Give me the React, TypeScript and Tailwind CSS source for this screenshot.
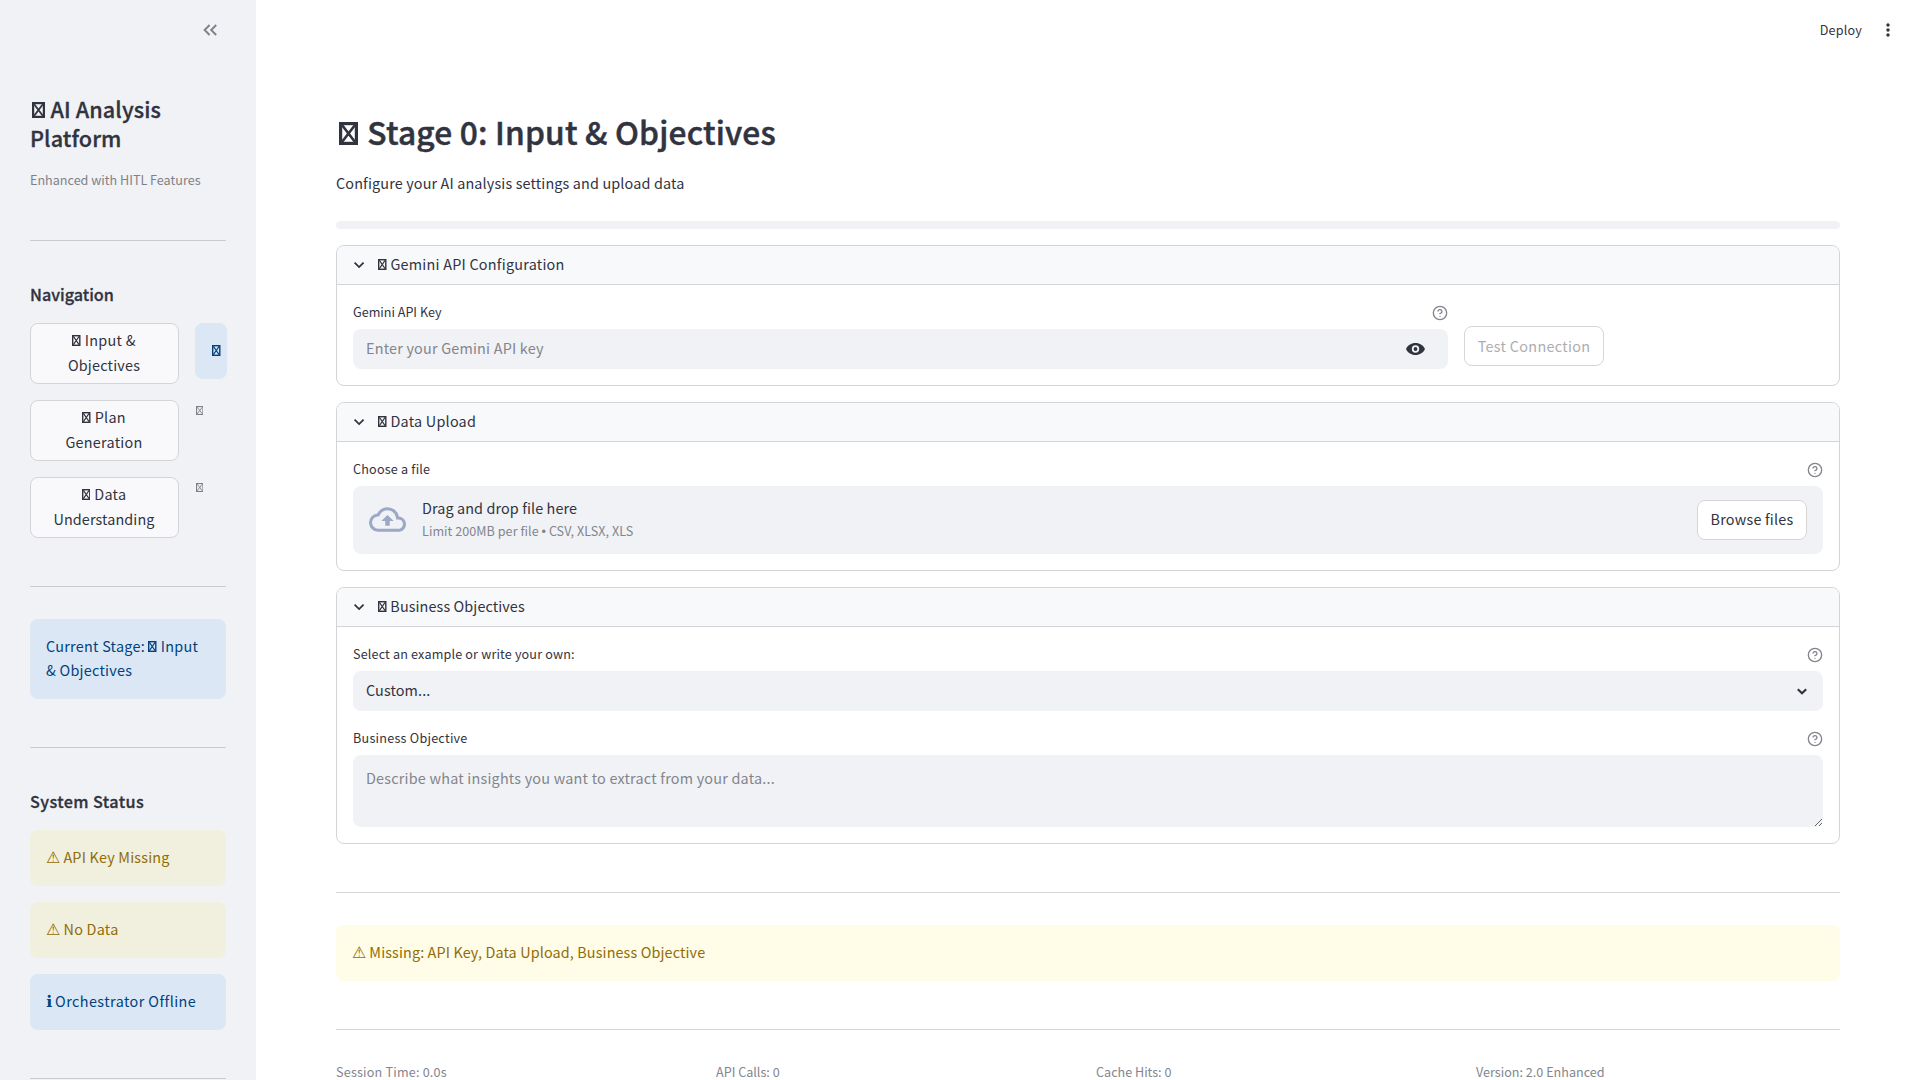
import React from "react";
import { MdMoreVert, MdOutlineCloudUpload } from "react-icons/md";
import { FiHelpCircle } from "react-icons/fi";

type Kids = { children?: React.ReactNode; className?: string };

/* Boxed cross shown where an emoji glyph is missing. */
function Box({ className = "mr-[0.5px] h-[11px] w-[8.5px]", w = 8.5, h = 11, s = 1.4, x = 1.1 }: { className?: string; w?: number; h?: number; s?: number; x?: number }) {
  const a = s / 2;
  return (
    <svg className={"inline-block align-baseline " + className} viewBox={`0 0 ${w} ${h}`} fill="none" stroke="currentColor">
      <rect x={a} y={a} width={w - s} height={h - s} strokeWidth={s} />
      <path d={`M${s} ${s}L${w - s} ${h - s}M${w - s} ${s}L${s} ${h - s}`} strokeWidth={x} />
    </svg>
  );
}

function Warn() {
  return <span className="mr-px inline-block w-[13px] font-['DejaVu_Sans'] text-[16px] leading-none tracking-normal">⚠</span>;
}

function SideRule({ className = "" }: Kids) {
  return <div className={"h-px shrink-0 bg-[#cacbd0] " + className} />;
}

function NavButton({ first, second, tracking }: { first: string; second: string; tracking: string }) {
  return (
    <button className="flex h-[61px] w-[149px] flex-col items-center justify-center rounded-lg border border-[#d3d4d8] bg-[#f9f9fb] pr-px pb-[3px] leading-[25px]">
      <span className="tracking-[0.27px]"><Box /> {first}</span>
      <span className={tracking}>{second}</span>
    </button>
  );
}

function Alert({ children, className = "" }: Kids) {
  return <div className={"flex h-14 shrink-0 items-center rounded-lg px-4 pb-[2px] " + className}>{children}</div>;
}

function Expander({ title, children, className = "", tracking }: Kids & { title: string; tracking: string }) {
  return (
    <section className={"shrink-0 overflow-hidden rounded-lg border border-[#d3d4d8] " + className}>
      <div className="flex h-[39px] items-center border-b border-[#d3d4d8] bg-[#f8f9fb] pl-3">
        <svg className="h-5 w-5" viewBox="0 0 20 20" fill="none" stroke="currentColor" strokeWidth="1.8">
          <path d="M5.600 7.600 10.100 12.100 14.600 7.600" />
        </svg>
        <span className={"ml-[9px] pb-[2px] leading-6 " + tracking}><Box /> {title}</span>
      </div>
      <div className="px-4 pt-[17px] pb-4">{children}</div>
    </section>
  );
}

function Label({ children, className = "" }: Kids) {
  return (
    <div className={"mb-[7px] flex h-5 items-center justify-between text-[12.6px] leading-5 " + className}>
      <span>{children}</span>
      <FiHelpCircle className="mt-px h-4 w-4 text-[#83848c]" />
    </div>
  );
}

export default function App() {
  return (
    <div className="flex h-screen w-full overflow-hidden bg-white font-['Noto_Sans_CJK_SC',sans-serif] text-[14.4px] text-[#31333f]">
      <aside className="flex w-64 shrink-0 flex-col overflow-hidden bg-[#f0f2f6] px-[30px]">
        <div className="flex h-[60px] shrink-0 items-center justify-end pr-[9px]">
          <svg className="h-3 w-[14px] text-[#7f8189]" viewBox="0 0 14 12" fill="none" stroke="currentColor" strokeWidth="1.9">
            <path d="M6.600 1 1.600 6 6.600 11M13.200 1 8.200 6 13.200 11" />
          </svg>
        </div>
        <h2 className="mt-[34px] text-[21.6px] leading-[29px] font-medium tracking-[0.1px] [-webkit-text-stroke:0.3px]">
          <Box className="mr-px ml-[1.500px] h-4 w-[13px]" w={13} h={16} s={2.2} x={1.8} /> AI Analysis<br />Platform
        </h2>
        <p className="mt-[18px] text-[12.6px] leading-5 text-[#7f8189]">Enhanced with HITL Features</p>
        <SideRule className="mt-[50px]" />
        <h3 className="mt-[42px] text-[16.2px] leading-[22px] font-medium [-webkit-text-stroke:0.3px]">Navigation</h3>

        <div className="mt-[18px] flex flex-col gap-4">
          <div className="flex w-[197px] items-start gap-4">
            <NavButton first="Input &" second="Objectives" tracking="tracking-[0.2px]" />
            <div className="flex h-14 w-8 items-center rounded-lg bg-[#dbe7f4] pb-[2px] pl-[17px] text-[#004280]"><Box /></div>
          </div>
          <div className="flex items-start gap-4">
            <NavButton first="Plan" second="Generation" tracking="tracking-[0.25px]" />
            <span className="mt-[6px] ml-[0.5px] flex text-[#7f8189]"><Box className="h-[9px] w-[7.5px]" w={7.5} h={9} s={1.1} x={0.9} /></span>
          </div>
          <div className="flex items-start gap-4">
            <NavButton first="Data" second="Understanding" tracking="tracking-[0.1px]" />
            <span className="mt-[6px] ml-[0.5px] flex text-[#7f8189]"><Box className="h-[9px] w-[7.5px]" w={7.5} h={9} s={1.1} x={0.9} /></span>
          </div>
        </div>

        <SideRule className="mt-12" />
        <div className="mt-8 flex h-20 shrink-0 items-center rounded-lg bg-[#dbe7f4] px-4 pb-[2px] leading-6 tracking-[0.25px] text-[#004280]">
          <p>Current Stage: <Box /> Input<br />&amp; Objectives</p>
        </div>
        <SideRule className="mt-12" />
        <h3 className="mt-[42px] text-[16.2px] leading-[22px] font-medium tracking-[0.4px] [-webkit-text-stroke:0.3px]">System Status</h3>
        <div className="mt-[18px] flex flex-col gap-4">
          <Alert className="bg-[#f1f0df] tracking-[0.2px] text-[#926c05]"><p><Warn /> API Key Missing</p></Alert>
          <Alert className="bg-[#f1f0df] tracking-[0.25px] text-[#926c05]"><p><Warn /> No Data</p></Alert>
          <Alert className="bg-[#dbe7f4] tracking-[0.42px] text-[#004280]">
            <p><span className="font-['DejaVu_Sans'] text-[16px] leading-none tracking-normal">ℹ</span><span className="ml-[3px]">Orchestrator Offline</span></p>
          </Alert>
        </div>
        <SideRule className="mt-12" />
      </aside>

      <main className="flex min-w-0 flex-1 flex-col">
        <header className="flex h-[60px] shrink-0 items-center justify-end pr-[22px]">
          <span className="pb-px text-[12.6px] leading-5 tracking-[0.2px]">Deploy</span>
          <MdMoreVert className="ml-4 h-5 w-5" />
        </header>

        <div className="flex flex-col px-20 pt-[50px]">
          <h1 className="text-[31.7px] leading-[42px] font-medium tracking-[0.2px] [-webkit-text-stroke:0.5px]">
            <Box className="mr-[2.500px] ml-[2.500px] h-[23px] w-[19px]" w={19} h={23} s={3.2} x={2.6} /> Stage 0: Input &amp; Objectives
          </h1>
          <p className="mt-[19px] leading-6 tracking-[0.14px]">Configure your AI analysis settings and upload data</p>
          <div className="mt-[26px] h-2 rounded bg-[#f0f2f6]" />

          <Expander className="mt-4" title="Gemini API Configuration" tracking="tracking-[0.23px]">
            <div className="flex items-end gap-4">
              <div className="w-[1095px]">
                <Label>Gemini API Key</Label>
                <div className="flex h-10 items-center justify-between rounded-lg bg-[#f0f2f6] pr-[23.500px] pl-[13px]">
                  <span className="pb-[2px] leading-6 tracking-[0.2px] text-[#83858d]">Enter your Gemini API key</span>
                  <svg className="h-3 w-[19px]" viewBox="0 0 19 12" fill="currentColor">
                    <path fillRule="evenodd" d="M9.5 0C5.2 0 1.5 2.5 0 6c1.5 3.500 5.200 6 9.500 6S17.500 9.500 19 6C17.500 2.500 13.800 0 9.500 0ZM9.500 9.700a3.700 3.700 0 1 1 0-7.400 3.700 3.700 0 0 1 0 7.400Z" />
                    <circle cx="9.500" cy="6" r="1.900" />
                  </svg>
                </div>
              </div>
              <button className="mb-[3px] flex h-10 w-[140px] items-center justify-center rounded-lg border border-[#d6d6d9] tracking-[0.3px] text-[#adadb2]">Test Connection</button>
            </div>
          </Expander>

          <Expander className="mt-4" title="Data Upload" tracking="tracking-[0.23px]">
            <Label className="tracking-[0.2px]">Choose a file</Label>
            <div className="flex h-[68px] items-center rounded-lg bg-[#f0f2f6] px-4">
              <MdOutlineCloudUpload className="mb-[2px] h-[37px] w-[37px] text-[#9ba8c6]" />
              <div className="mb-[2px] ml-4">
                <p className="leading-6 tracking-[0.1px]">Drag and drop file here</p>
                <p className="text-[12.6px] leading-[22px] tracking-[0.04px] text-[#83858d]">
                  Limit 200MB per file <span className="font-['Liberation_Sans']">•</span> CSV, XLSX, XLS
                </p>
              </div>
              <button className="ml-auto flex h-10 w-[110px] items-center justify-center rounded-lg border border-[#d6d6d9] bg-white pb-[2px] tracking-[0.2px]">Browse files</button>
            </div>
          </Expander>

          <Expander className="mt-4" title="Business Objectives" tracking="tracking-[0.1px]">
            <Label className="tracking-[0.16px]">Select an example or write your own:</Label>
            <div className="flex h-10 items-center justify-between rounded-lg bg-[#f0f2f6] pr-4 pl-[13px]">
              <span className="pb-[2px] leading-6 tracking-[0.1px]">Custom...</span>
              <svg className="h-[7px] w-[10px]" viewBox="0 0 10 7" fill="none" stroke="currentColor" strokeWidth="2.200">
                <path d="M.8 1.200 5 5.300 9.200 1.200" />
              </svg>
            </div>
            <Label className="mt-[17px] tracking-[0.25px]">Business Objective</Label>
            <textarea
              className="block h-[72px] w-full resize-y rounded-lg bg-[#f0f2f6] px-[13px] pt-[11px] leading-6 tracking-[0.21px] placeholder:text-[#83858d]"
              placeholder="Describe what insights you want to extract from your data..."
            />
          </Expander>

          <div className="mt-12 h-px bg-[#d6d6d9]" />
          <Alert className="mt-8 bg-[#fffce7] tracking-[0.12px] text-[#926c05]"><p><Warn /> Missing: API Key, Data Upload, Business Objective</p></Alert>
          <div className="mt-12 h-px bg-[#d6d6d9]" />
          <footer className="mt-8 grid grid-cols-4 gap-4 text-[12.6px] leading-5 text-[#83858d]">
            <span className="tracking-[0.2px]">Session Time: 0.0s</span>
            <span>API Calls: 0</span>
            <span>Cache Hits: 0</span>
            <span>Version: 2.0 Enhanced</span>
          </footer>
        </div>
      </main>
    </div>
  );
}
